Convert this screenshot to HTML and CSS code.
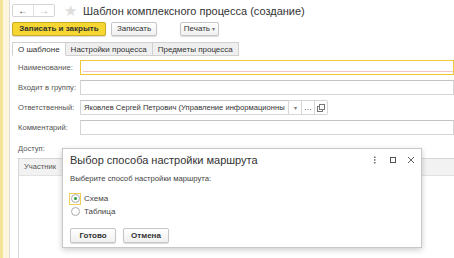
FILE: index.html
```html
<!DOCTYPE html>
<html lang="ru">
<head>
    <meta charset="UTF-8">
    <title>Шаблон комплексного процесса (создание)</title>
    <link rel="stylesheet" href="styles.css">
</head>
<body>

<div class="page">
    <div class="strip"></div>

    <div class="form">
        <!-- Заголовок окна -->
        <div class="header">
            <div class="nav">
                <span class="nav-btn">&#8592;</span>
                <span class="nav-btn dim">&#8594;</span>
            </div>
            <span class="star">&#9733;</span>
            <span class="title">Шаблон комплексного процесса (создание)</span>
        </div>

        <!-- Командная панель -->
        <div class="toolbar">
            <button class="btn btn-main">Записать и закрыть</button>
            <button class="btn btn-save">Записать</button>
            <button class="btn btn-print">Печать <span class="caret">&#9662;</span></button>
        </div>

        <!-- Закладки -->
        <div class="tabs">
            <span class="tab active">О шаблоне</span>
            <span class="tab">Настройки процесса</span>
            <span class="tab">Предметы процесса</span>
        </div>

        <div class="fields">
            <div class="row">
                <label>Наименование:</label>
                <div class="input focused"><span class="required"></span></div>
            </div>
            <div class="row">
                <label>Входит в группу:</label>
                <div class="input"></div>
            </div>
            <div class="row">
                <label>Ответственный:</label>
                <div class="input short">Яковлев Сергей Петрович (Управление информационны</div>
                <span class="sbtn"><span class="caret">&#9662;</span></span>
                <span class="sbtn">
                    <svg width="8" height="8" viewBox="0 0 8 8"><rect x="1" y="5" width="1" height="1" fill="#777"/><rect x="3.5" y="5" width="1" height="1" fill="#777"/><rect x="6" y="5" width="1" height="1" fill="#777"/></svg>
                </span>
                <span class="sbtn last">
                    <svg width="8" height="8" viewBox="0 0 8 8"><rect x="0.5" y="2.5" width="5" height="5" fill="#fff" stroke="#777"/><rect x="2.5" y="0.5" width="5" height="5" fill="#fff" stroke="#777"/></svg>
                </span>
            </div>
            <div class="row">
                <label>Комментарий:</label>
                <div class="input"></div>
            </div>
            <div class="row access">
                <label>Доступ:</label>
            </div>

            <div class="table">
                <div class="table-head">Участник</div>
            </div>
        </div>
    </div>

    <!-- Диалог выбора -->
    <div class="dialog">
        <div class="dialog-head">
            <span class="dialog-title">Выбор способа настройки маршрута</span>
            <span class="dialog-icons">
                <svg width="8" height="8" viewBox="0 0 8 8"><rect x="3" y="0.5" width="1.5" height="1.5" fill="#666"/><rect x="3" y="3.2" width="1.5" height="1.5" fill="#666"/><rect x="3" y="6" width="1.5" height="1.5" fill="#666"/></svg>
                <svg width="8" height="8" viewBox="0 0 8 8"><rect x="1.5" y="1.5" width="5" height="5" fill="none" stroke="#555"/></svg>
                <svg width="8" height="8" viewBox="0 0 8 8"><path d="M1 1L7 7M7 1L1 7" stroke="#666" stroke-width="1"/></svg>
            </span>
        </div>
        <div class="dialog-text">Выберите способ настройки маршрута:</div>
        <div class="radios">
            <div class="radio-row"><span class="focus"><span class="radio on"></span></span>Схема</div>
            <div class="radio-row"><span class="focus none"><span class="radio"></span></span>Таблица</div>
        </div>
        <div class="dialog-buttons">
            <button class="btn dbtn">Готово</button>
            <button class="btn dbtn">Отмена</button>
        </div>
    </div>
</div>

</body>
</html>
```
FILE: styles.css
```css
body {
    margin: 0;
    padding: 0;
    font-family: "Liberation Sans", Arial, sans-serif;
    font-size: 8px;
    color: #333;
    background-color: #fff;
    overflow: hidden;
}

.page {
    position: relative;
    display: flex;
    width: 454px;
    height: 258px;
}

.strip {
    width: 10px;
    flex-shrink: 0;
    background: linear-gradient(to right, #f6e39a 0, #f6e39a 3px, #fdf6dc 3px, #fdf6dc 9px, #dcdcdc 9px);
}

.form {
    flex: 1;
    padding-left: 2px;
    min-width: 0;
}

/* Заголовок */
.header {
    display: flex;
    align-items: center;
    height: 19px;
    margin-top: 1px;
}

.nav {
    display: flex;
    border: 1px solid #d4d4d4;
    border-radius: 2px;
    height: 11px;
    background-color: #fff;
}

.nav-btn {
    width: 20px;
    text-align: center;
    font-size: 10px;
    line-height: 11px;
    color: #444;
}

.nav-btn.dim {
    color: #aaa;
    border-left: 1px solid #e2e2e2;
}

.star {
    margin-left: 9px;
    font-size: 15px;
    color: #dedede;
    line-height: 15px;
}

.title {
    margin-left: 6px;
    font-size: 11px;
    color: #333;
    white-space: nowrap;
}

/* Панель кнопок */
.toolbar {
    display: flex;
    align-items: center;
    gap: 5px;
    margin-top: 1px;
    height: 15px;
}

.btn {
    font-family: "Liberation Sans", Arial, sans-serif;
    font-size: 8px;
    color: #333;
    height: 14px;
    padding: 0 6px;
    border: 1px solid #c6c6c6;
    border-radius: 2px;
    background: linear-gradient(#fff, #f0f0f0);
    box-shadow: 0 1px 1px rgba(0, 0, 0, 0.15);
    white-space: nowrap;
}

.btn-main {
    width: 94px;
    padding: 0;
    font-weight: bold;
    background: #f5d632;
    border-color: #c9ad24;
}

.btn-save {
    width: 46px;
    padding: 0;
}

.btn-print {
    width: 39px;
    padding: 0;
    margin-left: 18px;
}

.caret {
    font-size: 6px;
    color: #777;
}

/* Закладки */
.tabs {
    display: flex;
    margin-top: 6px;
    height: 14px;
}

.tab {
    padding: 0 5px;
    line-height: 13px;
    font-size: 8px;
    background-color: #efefef;
    border: 1px solid #d0d0d0;
    border-left: none;
    white-space: nowrap;
}

.tab.active {
    background-color: #fff;
    border-left: 1px solid #d0d0d0;
    border-bottom-color: #fff;
}

/* Поля */
.fields {
    padding-left: 6px;
}

.row {
    display: flex;
    align-items: center;
    height: 15px;
    margin-top: 5px;
}

.row:first-child {
    margin-top: 4px;
}

.row label {
    width: 62px;
    flex-shrink: 0;
    font-size: 7.6px;
    color: #555;
    white-space: nowrap;
}

.input {
    flex: 1;
    height: 13px;
    border: 1px solid #d6d6d6;
    border-top-color: #c4c4c4;
    line-height: 13px;
    padding-left: 3px;
    white-space: nowrap;
    position: relative;
}

.input.focused {
    border-color: #f0c93a;
}

.required {
    position: absolute;
    left: 2px;
    right: 0;
    bottom: 2px;
    border-bottom: 1px solid #f5c6c6;
}

.input.short {
    flex: none;
    width: 204px;
    font-size: 7.6px;
    color: #333;
}

.sbtn {
    display: flex;
    align-items: center;
    justify-content: center;
    width: 12px;
    height: 13px;
    border: 1px solid #d6d6d6;
    border-left: none;
    line-height: 12px;
}

.sbtn.last {
    border-radius: 0 2px 2px 0;
}

.row.access {
    margin-top: 6px;
}

.table {
    margin-top: 2px;
    height: 110px;
    border: 1px solid #d6d6d6;
    border-right: none;
}

.table-head {
    height: 16px;
    line-height: 16px;
    padding-left: 5px;
    background-color: #f2f2f2;
    color: #555;
    font-size: 7.6px;
    border-bottom: 1px solid #e2e2e2;
}

/* Диалог */
.dialog {
    position: absolute;
    left: 62px;
    top: 148px;
    width: 360px;
    height: 100px;
    background-color: #fff;
    border: 1px solid #c8c8c8;
    box-shadow: 0 2px 6px rgba(0, 0, 0, 0.2);
    padding-left: 7px;
    box-sizing: border-box;
}

.dialog-head {
    display: flex;
    align-items: center;
    height: 22px;
    padding-right: 6px;
}

.dialog-title {
    flex: 1;
    font-size: 11px;
    color: #333;
}

.dialog-icons {
    display: flex;
    align-items: center;
    gap: 10px;
}

.dialog-text {
    margin-top: 3px;
    font-size: 7.7px;
    color: #444;
}

.radios {
    margin-top: 9px;
}

.radio-row {
    display: flex;
    align-items: center;
    height: 13px;
    font-size: 8px;
    color: #444;
}

.focus {
    display: flex;
    align-items: center;
    justify-content: center;
    width: 10px;
    height: 10px;
    margin-right: 3px;
    margin-left: -1px;
    border: 1px solid #f1cf5a;
}

.focus.none {
    border-color: transparent;
}

.radio {
    width: 7px;
    height: 7px;
    border: 1px solid #aaa;
    border-radius: 50%;
    position: relative;
    background-color: #fff;
}

.radio.on::after {
    content: "";
    position: absolute;
    left: 2px;
    top: 2px;
    width: 3px;
    height: 3px;
    border-radius: 50%;
    background-color: #2d9a3c;
}

.dialog-buttons {
    display: flex;
    gap: 7px;
    margin-top: 10px;
}

.dbtn {
    width: 46px;
    height: 15px;
    font-weight: bold;
    padding: 0;
}
```
